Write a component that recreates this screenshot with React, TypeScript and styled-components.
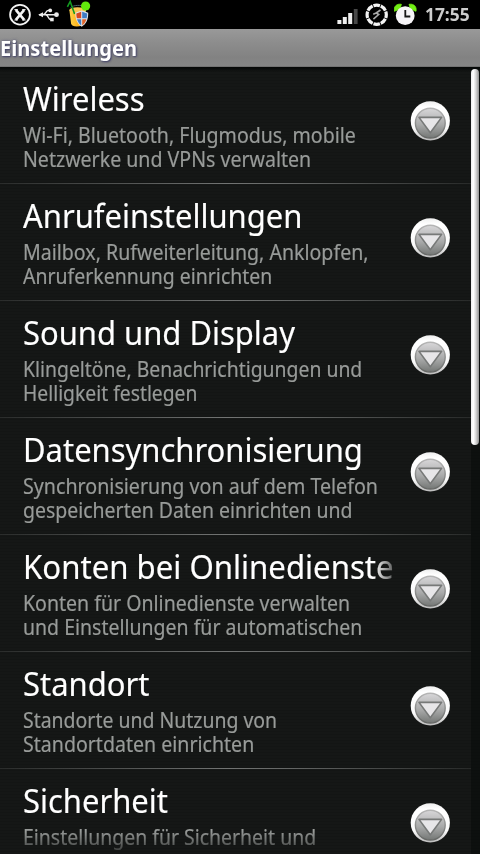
import React from "react";
import styled, { createGlobalStyle } from "styled-components";

const GlobalStyle = createGlobalStyle`
  * { box-sizing: border-box; }
  html, body { margin: 0; background: #000; overflow: hidden; }
`;

const Screen = styled.main`
  width: 480px;
  height: 854px;
  display: flex;
  flex-direction: column;
  overflow: hidden;
  background: #141615;
  font-family: "Noto Sans", "Open Sans", sans-serif;
`;

const StatusBar = styled.header`
  flex: none;
  height: 29px;
  display: flex;
  justify-content: space-between;
  background: #000;
`;

const Notifications = styled.div`
  display: flex;
  padding-left: 8px;
  gap: 5px;
`;

const SystemStatus = styled.div`
  display: flex;
  gap: 5px;
  width: 143px;
`;

const Icon = styled.svg`
  display: block;
  flex: none;
`;

const Clock = styled.time`
  color: #ccc;
  font-size: 18px;
  font-weight: 700;
  line-height: 29px;
  margin-left: 2px;
  transform: scaleX(0.965);
  transform-origin: left;
`;

const TitleBar = styled.div`
  flex: none;
  height: 38px;
  display: flex;
  align-items: center;
  background: linear-gradient(#999 0, #8d8d8d 35%, #828282 75%, #858585 96%, #696969 100%);
`;

const Heading = styled.h1`
  margin: 0;
  color: #fff;
  font-size: 21px;
  font-weight: 700;
  line-height: 38px;
  text-shadow: 1px 1px 2px #446, 0 0 3px #557;
  transform: scaleX(0.957);
  transform-origin: left;
`;

const Body = styled.div`
  flex: 1;
  min-height: 0;
  display: flex;
  background:
    linear-gradient(#050706, transparent 5px),
    repeating-linear-gradient(#151716 0 1px, #131514 1px 2px, #151716 2px 3px);
`;

const List = styled.ul`
  width: 471px;
  margin: 0;
  padding: 0;
  list-style: none;
  overflow: hidden;
`;

const Track = styled.div`
  flex: 1;
  padding-top: 2px;
  background: rgba(5, 10, 7, 0.5);
`;

const Thumb = styled.div`
  width: 8px;
  height: 376px;
  border-radius: 4px;
  background: linear-gradient(90deg, #eee, #fff 30%, #d8d8d8 60%, #929292);
`;

const Item = styled.li`
  height: 117px;
  display: grid;
  grid-template-columns: 370px 1fr;
  grid-template-rows: 116px 1px;
  padding-left: 23px;
`;

const Copy = styled.div<{ $last?: boolean }>`
  overflow: hidden;
  padding-top: 10px;
  ${(p) => p.$last && "mask-image: linear-gradient(#000 62px, rgba(0, 0, 0, 0.25) 84px);"}
`;

const Label = styled.h2<{ $faded?: boolean }>`
  margin: 0 0 2px;
  width: 394px;
  color: #fff;
  font-size: 33px;
  font-weight: 400;
  line-height: 44px;
  white-space: nowrap;
  -webkit-text-stroke: 0.15px;
  transform: scaleX(${(p) => (p.$faded ? 0.944 : 0.938)});
  transform-origin: left;
  ${(p) => p.$faded && "mask-image: linear-gradient(90deg, #000 372px, rgba(0, 0, 0, 0.25) 394px);"}
`;

const SummaryLine = styled.p<{ $fit: number }>`
  margin: 0;
  color: #989b99;
  font-size: 21px;
  line-height: 24px;
  white-space: nowrap;
  width: max-content;
  -webkit-text-stroke: 0.2px;
  transform: scaleX(${(p) => p.$fit});
  transform-origin: left;
`;

const Disclosure = styled.div`
  padding: 33px 0 0 17px;
`;

const Divider = styled.div`
  grid-column: 1 / -1;
  margin-left: -23px;
  background: linear-gradient(90deg, #2a2c2b, #727473 48%, #646665 62%, #282a29);
`;

type Line = [text: string, fit: number];
interface Setting {
  label: string;
  lines: Line[];
  faded?: boolean;
}

const settings: Setting[] = [
  { label: "Wireless", lines: [["Wi-Fi, Bluetooth, Flugmodus, mobile", 0.932], ["Netzwerke und VPNs verwalten", 0.932]] },
  { label: "Anrufeinstellungen", lines: [["Mailbox, Rufweiterleitung, Anklopfen,", 0.932], ["Anruferkennung einrichten", 0.927]] },
  { label: "Sound und Display", lines: [["Klingeltöne, Benachrichtigungen und", 0.923], ["Helligkeit festlegen", 0.919]] },
  { label: "Datensynchronisierung", lines: [["Synchronisierung von auf dem Telefon", 0.936], ["gespeicherten Daten einrichten und", 0.927]] },
  { label: "Konten bei Onlinedienste", faded: true, lines: [["Konten für Onlinedienste verwalten", 0.931], ["und Einstellungen für automatischen", 0.928]] },
  { label: "Standort", lines: [["Standorte und Nutzung von", 0.926], ["Standortdaten einrichten", 0.932]] },
  { label: "Sicherheit", lines: [["Einstellungen für Sicherheit und", 0.926]] },
];

const CloseIcon = () => (
  <Icon width="24" height="29" viewBox="0 0 24 29" fill="none" stroke="#f4f4f4">
    <circle cx="12" cy="14.7" r="9.9" strokeWidth="1.8" />
    <path d="M7.8 9.8l8.4 10M16.2 9.8L7.8 19.8" strokeWidth="2.6" />
    <path d="M6.4 9.6h3.4M14.2 9.6h3.4M6.4 20h3.4M14.2 20h3.4" strokeWidth="1" />
  </Icon>
);

const UsbIcon = () => (
  <Icon width="24" height="29" viewBox="0 0 24 29" fill="none" stroke="#ececec" strokeWidth="1.4">
    <path d="M2 14.7h17M6 14.7c3 0 2.5-4.3 5.5-4.3h2M8.5 14.7c3 0 2.5 4.8 5 4.8h1.5" />
    <circle cx="19.5" cy="14.7" r="2.4" fill="#ececec" stroke="none" />
    <path d="M6 12.2v5l-4.8-2.5z" fill="#ececec" stroke="none" />
    <circle cx="13.2" cy="10.4" r="1.9" fill="#ececec" stroke="none" />
    <path d="M13.2 17.8h3.5v3.5h-3.5z" fill="#ececec" stroke="none" />
  </Icon>
);

const JuiceIcon = () => (
  <Icon width="30" height="29" viewBox="0 0 30 29">
    <defs>
      <linearGradient id="juice" x2="1">
        <stop stopColor="#ffd44a" />
        <stop offset="0.5" stopColor="#ffb51c" />
        <stop offset="1" stopColor="#ffe9a0" />
      </linearGradient>
    </defs>
    <path d="M3.4 10l1.7 13.6c.3 2 2.4 3 5.7 3s6-1 6.6-3L20 10z" fill="url(#juice)" />
    <ellipse cx="11.5" cy="10" rx="8.2" ry="2.8" fill="#f8c653" />
    <path d="M4.4 7.5C7.5 5 15 4.8 19 6.5" fill="none" stroke="#46606a" strokeWidth="1" />
    <path d="M1.4 6.8l2.8-5.3 4.4 12.5" fill="none" stroke="#139b20" strokeWidth="1.6" />
    <path d="M9.4 12.8l6.3-2.3 6.5 2.3c.2 7-2.2 11.4-6.5 13.9C11.4 23.9 9.2 19.5 9.4 12.8z" fill="#dfe6ec" />
    <path d="M10.3 13.6l4.9-1.8v6.4h-4.4c-.4-1.5-.5-3-.5-4.6z" fill="#d84820" />
    <path d="M16.2 11.8l5 1.8c0 1.6-.1 3.1-.5 4.6h-4.5z" fill="#3f7cc4" />
    <path d="M11 19.2h4.2v6.1c-2-1.4-3.4-3.5-4.2-6.1z" fill="#3f7cc4" />
    <path d="M16.2 19.2h4.2c-.7 2.6-2.1 4.7-4.2 6.1z" fill="#e0652c" />
    <circle cx="19.6" cy="6" r="4.6" fill="#62e80c" />
  </Icon>
);

const SignalIcon = () => (
  <Icon width="23" height="29" viewBox="0 0 23 29">
    <path d="M.4 20h4v4h-4zM5.8 17h4v7h-4zM11.2 13h4v11h-4z" fill="#eee" />
    <path d="M16.8 9h3.8v15h-3.8z" fill="#484848" />
  </Icon>
);

const SyncIcon = () => (
  <Icon width="24" height="29" viewBox="0 0 24 29" fill="none">
    <circle cx="11.7" cy="14.7" r="9.6" stroke="#f4f4f4" strokeWidth="3.2" pathLength="80" strokeDasharray="8.8 1.2" strokeDashoffset="4.4" />
    <path d="M15.5 10l-4.4 3 2.6 1.5-5.3 4.6M11.2 13l-3 1.2" stroke="#aaa" strokeWidth="1.6" />
  </Icon>
);

const AlarmIcon = () => (
  <Icon width="24" height="29" viewBox="0 0 24 29" fill="none">
    <path d="M.4 11.3C-.6 6.6 2.6 3.4 7.4 4.3L6 9zM22 11.3c1-4.7-2.2-7.9-7-7l1.4 4.7z" fill="#71ed13" stroke="#71ed13" strokeWidth=".8" />
    <circle cx="11.2" cy="15.7" r="9.4" fill="#f6f4f7" />
    <path d="M11.3 10v6.5h5" stroke="#171717" strokeWidth="1.8" />
  </Icon>
);

const ArrowBadge = () => (
  <Icon width="40" height="41" viewBox="0 0 40 41">
    <defs>
      <linearGradient id="rim" x2="0" y2="1">
        <stop stopColor="#eee" />
        <stop offset="0.15" stopColor="#fff" />
        <stop offset="0.7" stopColor="#fafafa" />
        <stop offset="1" stopColor="#bbb" />
      </linearGradient>
      <linearGradient id="face" x2="0" y2="1">
        <stop stopColor="#d8d7d9" />
        <stop offset="0.55" stopColor="#a9aaaa" />
        <stop offset="1" stopColor="#747775" />
      </linearGradient>
      <linearGradient id="faceEdge" x2="0" y2="1">
        <stop stopColor="#b5b5b5" />
        <stop offset="1" stopColor="#656765" />
      </linearGradient>
    </defs>
    <circle cx="20.3" cy="20.8" r="19.6" fill="url(#rim)" />
    <circle cx="20.3" cy="23.1" r="14.9" fill="url(#face)" stroke="url(#faceEdge)" strokeWidth="1.4" />
    <path d="M9 17.4h22.6L20.3 32.8z" fill="#e7e6e8" stroke="#777978" strokeWidth="1.6" strokeLinejoin="round" />
  </Icon>
);

export default function App() {
  return (
    <Screen>
      <GlobalStyle />
      <StatusBar>
        <Notifications>
          <CloseIcon />
          <UsbIcon />
          <JuiceIcon />
        </Notifications>
        <SystemStatus>
          <SignalIcon />
          <SyncIcon />
          <AlarmIcon />
          <Clock>17:55</Clock>
        </SystemStatus>
      </StatusBar>
      <TitleBar>
        <Heading>Einstellungen</Heading>
      </TitleBar>
      <Body>
        <List>
          {settings.map(({ label, lines, faded }, index) => (
            <Item key={label}>
              <Copy $last={index === settings.length - 1}>
                <Label $faded={faded}>{label}</Label>
                {lines.map(([text, fit]) => (
                  <SummaryLine key={text} $fit={fit}>{text}</SummaryLine>
                ))}
              </Copy>
              <Disclosure>
                <ArrowBadge />
              </Disclosure>
              <Divider />
            </Item>
          ))}
        </List>
        <Track>
          <Thumb />
        </Track>
      </Body>
    </Screen>
  );
}
